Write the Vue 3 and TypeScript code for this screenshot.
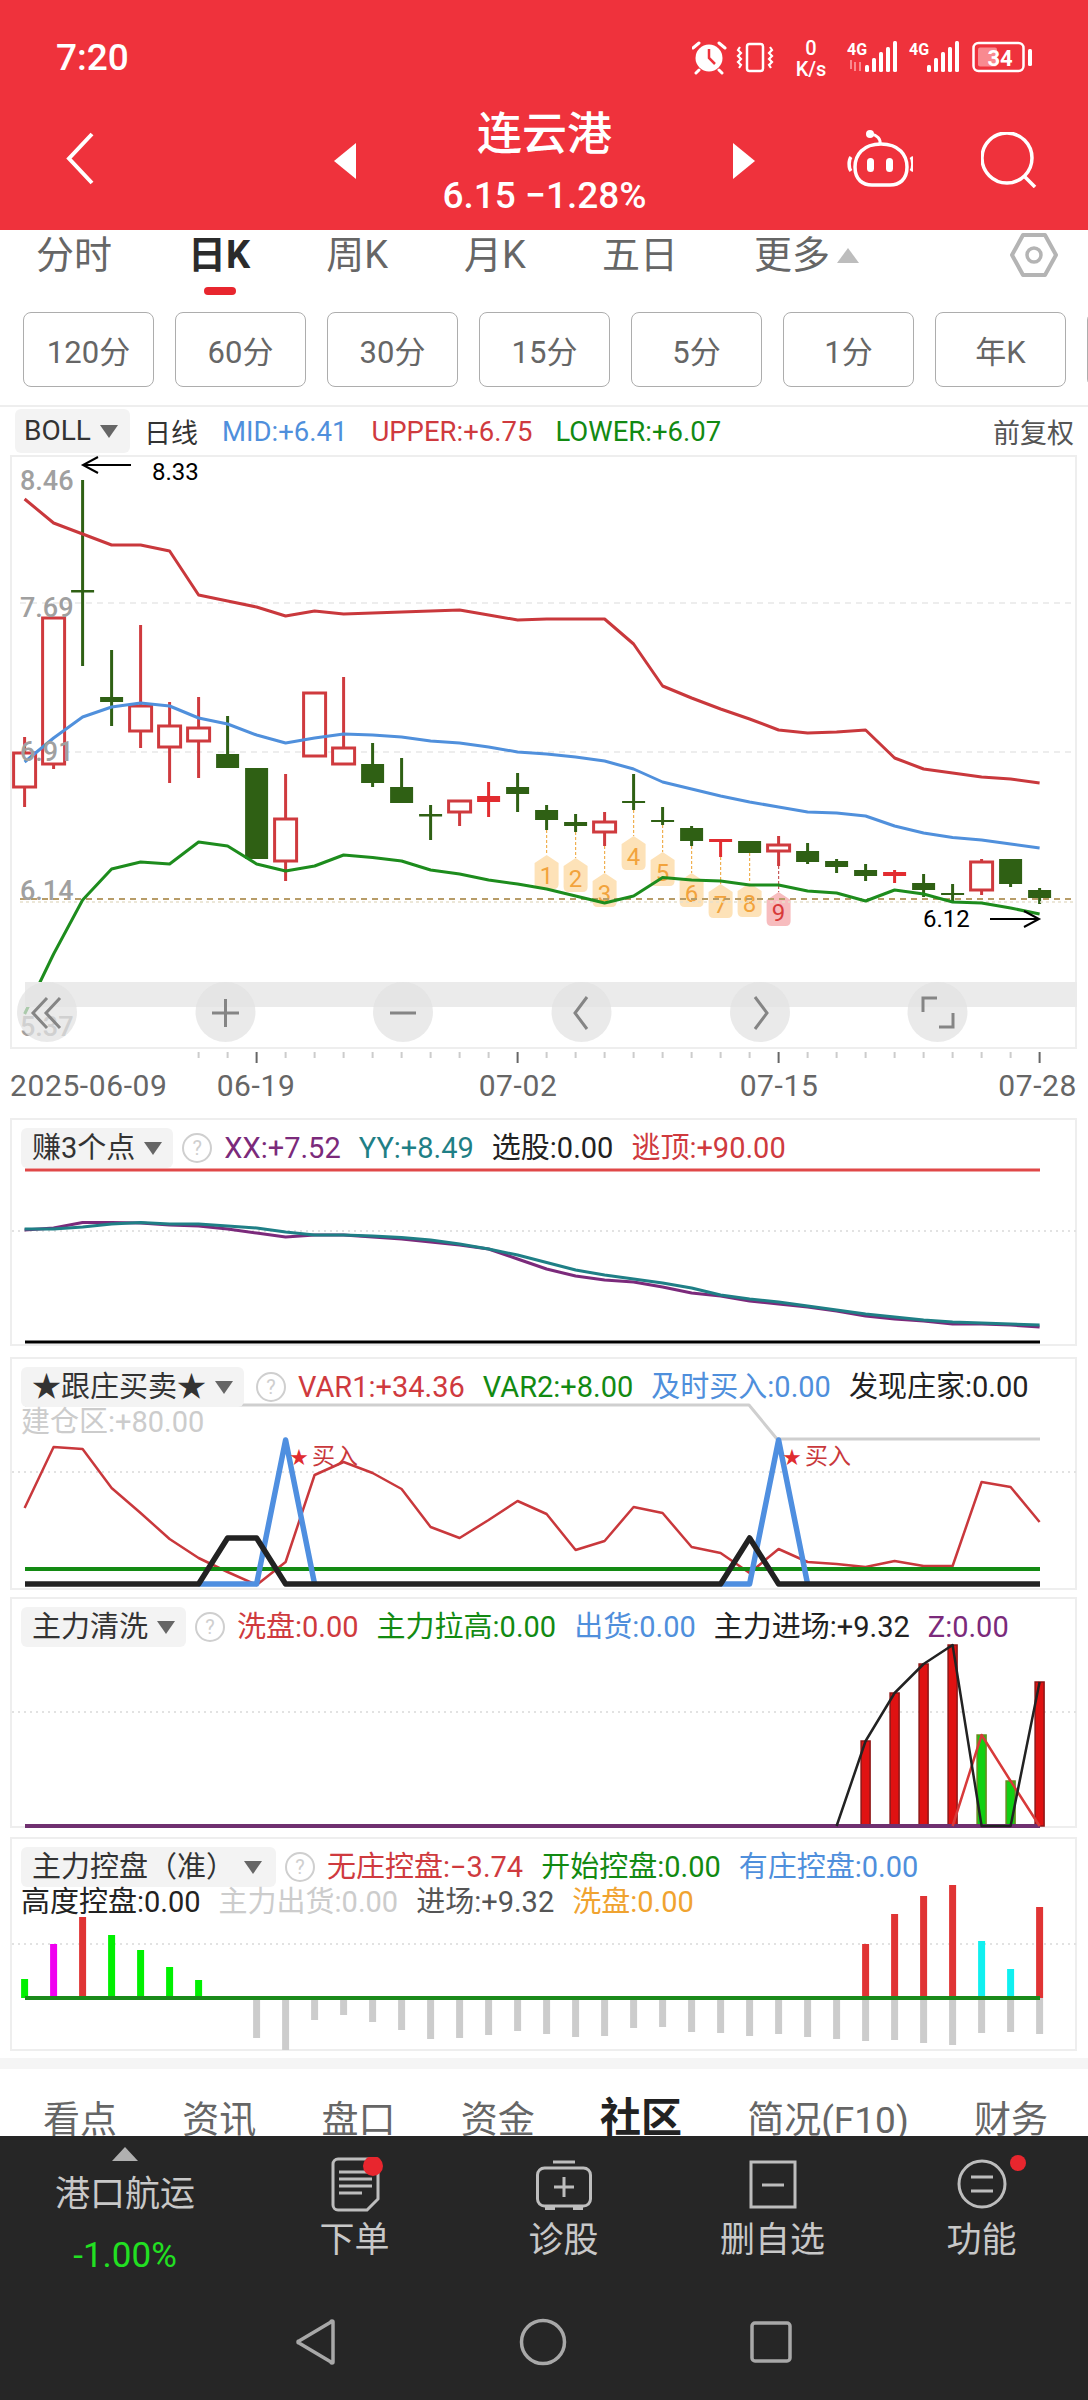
<template>
  <div class="screen">
    <header class="top">
      <div class="status">
        <span class="clock">7:20</span>
        <svg class="status-icons" width="340" height="44" viewBox="692 36 340 44">
          <!-- alarm -->
          <circle cx="709" cy="58" r="13.5" fill="#fff" />
          <path d="M709 49v9l6 6" fill="none" stroke="#ef323c" stroke-width="2.5" />
          <path d="M693 48l6-5M725 48l-6-5M699 70l-3 3M719 70l3 3" stroke="#fff" stroke-width="3" stroke-linecap="round" />
          <!-- vibrate -->
          <rect x="747" y="44" width="16" height="27" rx="2.5" fill="none" stroke="#fff" stroke-width="2.5" />
          <path d="M740 47l-2 3 3 3-3 3 3 3-3 3 3 3-2 3M770 47l2 3-3 3 3 3-3 3 3 3-3 3 2 3" fill="none" stroke="#fff" stroke-width="2.2" />
          <!-- net speed -->
          <text x="811" y="55" class="st-speed" text-anchor="middle">0</text>
          <text x="811" y="76" class="st-speed" text-anchor="middle">K/s</text>
          <!-- sim 1 -->
          <text x="847" y="55" class="st-net">4G</text>
          <path d="M851 60v9M855 71l0-9M860 71v-9" stroke="#fa8a90" stroke-width="2" />
          <rect v-for="b in signal" :key="'a' + b.x" :x="b.x + 865" :y="b.y" width="4" :height="72 - b.y" rx="1.5" fill="#fff" />
          <!-- sim 2 -->
          <text x="909" y="55" class="st-net">4G</text>
          <rect v-for="b in signal" :key="'b' + b.x" :x="b.x + 927" :y="b.y" width="4" :height="72 - b.y" rx="1.5" fill="#fff" />
          <!-- battery -->
          <rect x="973.5" y="43" width="50" height="28" rx="5" fill="none" stroke="#fff" stroke-width="2.5" />
          <rect x="978" y="47.5" width="19" height="19" rx="2" fill="#f98a90" />
          <rect x="1028" y="49" width="4" height="17" rx="1.5" fill="#fff" />
          <text x="1000" y="66" class="st-batt" text-anchor="middle">34</text>
        </svg>
      </div>
      <div class="nav">
        <svg class="back" width="28" height="53" viewBox="0 0 28 53">
          <path d="M26 2L3 26.5 26 51" fill="none" stroke="#fff" stroke-width="4" />
        </svg>
        <span class="tri tri-left"></span>
        <div class="title">
          <div class="name">连云港</div>
          <div class="price">6.15 −1.28%</div>
        </div>
        <span class="tri tri-right"></span>
        <svg class="robot" width="67" height="58" viewBox="0 0 67 58">
          <path d="M35 14C53 14 61 25 61 37C61 50 53 55 44 55H26C17 55 9 50 9 37C9 25 17 14 35 14z" fill="none" stroke="#fff" stroke-width="3.500" />
          <path d="M5 27c-2.500 3-2.500 11 0 14M65 27c2.500 3 2.500 11 0 14" fill="none" stroke="#fff" stroke-width="3.500" />
          <path d="M34 14c1-5-3-9-9-10" fill="none" stroke="#fff" stroke-width="3" />
          <circle cx="24" cy="4" r="4" fill="#fff" />
          <rect x="21" y="28" width="7" height="14" rx="3.500" fill="#fff" />
          <rect x="40" y="28" width="7" height="14" rx="3.500" fill="#fff" />
        </svg>
        <svg class="search" width="56" height="56" viewBox="0 0 56 56">
          <circle cx="26" cy="26" r="25" fill="none" stroke="#fff" stroke-width="3.500" />
          <path d="M44 45l10 10" stroke="#fff" stroke-width="3.500" />
        </svg>
      </div>
    </header>

    <nav class="periods">
      <span v-for="t in periods" :key="t" class="period" :class="{ on: t === '日K' }">{{ t }}</span>
      <span class="more-arrow"></span>
      <svg class="hex" width="48" height="46" viewBox="0 0 48 46">
        <path d="M13 3h22l11 20-11 20H13L2 23z" fill="none" stroke="#b4b4b4" stroke-width="4" stroke-linejoin="round" />
        <circle cx="24" cy="23" r="7" fill="none" stroke="#b4b4b4" stroke-width="3.5" />
      </svg>
    </nav>

    <div class="frames">
      <button v-for="f in frames" :key="f" class="frame">{{ f }}</button>
    </div>

    <div class="info">
      <span class="picker boll">BOLL<i class="caret"></i></span>
      <span class="info-item day">日线</span>
      <span class="info-item blue">MID:+6.41</span>
      <span class="info-item red">UPPER:+6.75</span>
      <span class="info-item green">LOWER:+6.07</span>
      <span class="info-item adj">前复权</span>
    </div>

    <!-- main K line chart, svg coordinates are page pixels -->
    <section class="box main-box">
      <svg class="plot" width="1067" height="594" viewBox="10 455 1067 594">
        <line x1="20" x2="1076" y1="603" y2="603" class="grid" />
        <line x1="20" x2="1076" y1="752" y2="752" class="grid" />
        <g v-for="(c, i) in candles" :key="i">
          <line :x1="X(i)" :x2="X(i)" :y1="c[1]" :y2="c[2]" :stroke="tone(c[0])" stroke-width="3" />
          <rect v-if="c[0] === 'r'" :x="X(i) - 11" :y="c[3]" width="22" :height="c[4] - c[3]" fill="#fff" :stroke="tone('r')" stroke-width="3" />
          <rect v-else :x="X(i) - 11.5" :y="c[3]" width="23" :height="c[4] - c[3]" :fill="tone(c[0])" />
        </g>
        <g v-for="t in tags" :key="t.n">
          <line :x1="X(t.i)" :x2="X(t.i)" :y1="candles[t.i][2]" :y2="t.top" :stroke="t.n === 9 ? '#c65a5a' : '#f0b050'" stroke-width="1.2" stroke-dasharray="3 2" />
          <path :d="tagShape(X(t.i), t.top, t.top + 34)" :fill="t.n === 9 ? '#f7bcbe' : '#fde2b8'" />
          <text :x="X(t.i)" :y="t.top + 29" class="tag" :fill="t.n === 9 ? '#d83a3a' : '#f2a33c'" text-anchor="middle">{{ t.n }}</text>
        </g>
        <line x1="20" x2="1076" y1="899" y2="899" stroke="#b79c68" stroke-width="2" stroke-dasharray="6 5" />
        <line x1="20" x2="1076" y1="902" y2="902" stroke="#e6e0cc" stroke-width="1.5" stroke-dasharray="3 3" />
        <polyline :points="line(upper)" class="ln" stroke="#c9383c" />
        <polyline :points="line(mid)" class="ln" stroke="#5090dc" />
        <polyline :points="line(lower)" class="ln" stroke="#1d8c1d" />
        <text x="20" y="490" class="axis">8.46</text>
        <text x="20" y="617" class="axis">7.69</text>
        <text x="20" y="761" class="axis">6.91</text>
        <text x="20" y="900" class="axis">6.14</text>
        <text x="20" y="1036" class="axis">5.37</text>
        <path d="M131 465H84M98 457l-15 8 15 8" fill="none" stroke="#000" stroke-width="2" />
        <text x="152" y="480" class="mark">8.33</text>
        <text x="923" y="927" class="mark">6.12</text>
        <path d="M990 919h48M1024 911l15 8-15 8" fill="none" stroke="#000" stroke-width="2" />
        <rect x="25" y="982" width="1052" height="25" fill="#ebebeb" />
        <circle v-for="cx in toolX" :key="cx" :cx="cx" cy="1012" r="30" fill="rgba(226,226,226,.72)" />
        <g fill="none" stroke="#858585" stroke-width="3">
          <path d="M47 998l-14 15 14 15M60 998l-14 15 14 15" />
          <path d="M212 1013h27M225.500 999v28" />
          <path d="M390 1013h26" />
          <path d="M587 997l-12 16 12 16" />
          <path d="M755 997l12 16-12 16" />
          <path d="M923 1012v-14h14M953 1013v14h-14" />
        </g>
      </svg>
    </section>

    <svg class="time-axis" width="1088" height="69" viewBox="0 1049 1088 69">
      <line v-for="i in tickIdx" :key="i" :x1="X(i)" :x2="X(i)" y1="1052" :y2="major.includes(i) ? 1063 : 1058" :stroke="major.includes(i) ? '#666' : '#ccc'" stroke-width="2" />
      <text x="10" y="1096" class="date">2025-06-09</text>
      <text x="256" y="1096" class="date" text-anchor="middle">06-19</text>
      <text x="518" y="1096" class="date" text-anchor="middle">07-02</text>
      <text x="779" y="1096" class="date" text-anchor="middle">07-15</text>
      <text x="1077" y="1096" class="date" text-anchor="end">07-28</text>
    </svg>

    <section class="box p-earn">
      <svg class="plot" width="1067" height="228" viewBox="10 1118 1067 228">
        <line x1="12" x2="1076" y1="1231" y2="1231" class="dots" />
        <line x1="25" x2="1040" y1="1170" y2="1170" stroke="#e04848" stroke-width="3" />
        <polyline :points="line(xx)" class="ln" stroke="#7b2a7b" />
        <polyline :points="line(yy)" class="ln" stroke="#1f7f86" />
        <line x1="25" x2="1040" y1="1342" y2="1342" stroke="#000" stroke-width="3" />
      </svg>
      <div class="legend">
        <span class="picker">赚3个点<i class="caret"></i></span>
        <span class="ask">?</span>
        <span class="purple">XX:+7.52</span>
        <span class="teal">YY:+8.49</span>
        <span class="black">选股:0.00</span>
        <span class="red">逃顶:+90.00</span>
      </div>
    </section>

    <section class="box p-follow">
      <svg class="plot" width="1067" height="233" viewBox="10 1357 1067 233">
        <line x1="12" x2="1076" y1="1472" y2="1472" class="dots" />
        <polyline points="25,1405 749,1405 777,1439 1040,1439" class="ln" stroke="#cfcfcf" />
        <polyline :points="line(var1)" class="ln thin" stroke="#c9383c" />
        <line x1="25" x2="1040" y1="1569" y2="1569" stroke="#138a13" stroke-width="4" />
        <polyline :points="`${X(6)},1584 ${X(8)},1584 ${X(9)},1440 ${X(10)},1584`" class="ln fat" stroke="#4f8fe0" />
        <polyline :points="`${X(24)},1584 ${X(25)},1584 ${X(26)},1440 ${X(27)},1584`" class="ln fat" stroke="#4f8fe0" />
        <polyline :points="`25,1584 ${X(6)},1584 ${X(7)},1538 ${X(8)},1538 ${X(9)},1584 ${X(24)},1584 ${X(25)},1538 ${X(26)},1584 1040,1584`" class="ln fat" stroke="#222" />
        <text x="290" y="1464" class="buy-star">★</text>
        <text x="312" y="1464" class="buy">买入</text>
        <text x="783" y="1464" class="buy-star">★</text>
        <text x="805" y="1464" class="buy">买入</text>
      </svg>
      <div class="legend">
        <span class="picker">★跟庄买卖★<i class="caret"></i></span>
        <span class="ask">?</span>
        <span class="red">VAR1:+34.36</span>
        <span class="green">VAR2:+8.00</span>
        <span class="blue">及时买入:0.00</span>
        <span class="black">发现庄家:0.00</span>
        <span class="pale">建仓区:+80.00</span>
      </div>
    </section>

    <section class="box p-wash">
      <svg class="plot" width="1067" height="231" viewBox="10 1597 1067 231">
        <line x1="12" x2="1076" y1="1712" y2="1712" class="dots" />
        <rect v-for="b in washBars" :key="b.i" :x="X(b.i) - 4.500" :y="b.top" width="9" :height="1826 - b.top" :fill="b.up ? '#e01212' : '#12d012'" :stroke="b.up ? '#8e1616' : '#6a8a20'" stroke-width="1.500" />
        <line x1="25" x2="1040" y1="1826" y2="1826" stroke="#6f3070" stroke-width="4" />
        <polyline :points="`${X(32)},1826 ${X(33)},1735 ${X(34)},1781 ${X(35)},1826`" class="ln thin" stroke="#d83a3a" />
        <polyline :points="`${X(28)},1826 ${X(29)},1741 ${X(30)},1693 ${X(31)},1664 ${X(32)},1645 ${X(33)},1826 ${X(34)},1826 ${X(35)},1682`" class="ln thin" stroke="#222" />
      </svg>
      <div class="legend">
        <span class="picker">主力清洗<i class="caret"></i></span>
        <span class="ask">?</span>
        <span class="red">洗盘:0.00</span>
        <span class="green">主力拉高:0.00</span>
        <span class="blue">出货:0.00</span>
        <span class="black">主力进场:+9.32</span>
        <span class="purple">Z:0.00</span>
      </div>
    </section>

    <section class="box p-ctrl">
      <svg class="plot" width="1067" height="214" viewBox="10 1837 1067 214">
        <line x1="12" x2="1076" y1="1944" y2="1944" class="dots" />
        <rect v-for="b in ctrlDown" :key="b.i" :x="X(b.i) - 3.500" y="1998" width="7" :height="b.end - 1998" fill="#cccccc" />
        <rect v-for="b in ctrlUp" :key="b.i" :x="X(b.i) - 3.500" :y="b.top" width="7" :height="1998 - b.top" :fill="b.fill" />
        <line x1="25" x2="1040" y1="1998" y2="1998" stroke="#1a8a1a" stroke-width="4" />
      </svg>
      <div class="legend">
        <span class="picker">主力控盘（准）<i class="caret"></i></span>
        <span class="ask">?</span>
        <span class="red">无庄控盘:−3.74</span>
        <span class="green">开始控盘:0.00</span>
        <span class="blue">有庄控盘:0.00</span>
        <span class="black">高度控盘:0.00</span>
        <span class="pale">主力出货:0.00</span>
        <span class="slate">进场:+9.32</span>
        <span class="orange">洗盘:0.00</span>
      </div>
    </section>

    <div class="strip"></div>

    <div class="tabs">
      <span v-for="t in tabs" :key="t" :class="{ on: t === '社区' }">{{ t }}</span>
    </div>

    <footer class="dock">
      <div class="actions">
        <div class="sector">
          <span class="sector-up"></span>
          <span class="sector-name">港口航运</span>
          <span class="sector-pct">-1.00%</span>
        </div>
        <div class="action">
          <svg width="64" height="56" viewBox="0 0 64 56">
            <path d="M15 2h35a5 5 0 0 1 5 5v35L44 53H15a5 5 0 0 1-5-5V7a5 5 0 0 1 5-5z" class="ic" />
            <path d="M16 15h32M16 22h33M16 29h33M16 36h23" class="ic" />
            <circle cx="50" cy="9" r="10" fill="#e8262e" />
          </svg>
          <span>下单</span>
        </div>
        <div class="action">
          <svg width="64" height="56" viewBox="0 0 64 56">
            <path d="M21 5h22" class="ic" />
            <rect x="5.500" y="11" width="53" height="38" rx="7" class="ic" />
            <path d="M13 50h10v3H13zM41 50h10v3H41z" fill="#bdbdbd" />
            <path d="M32 20v20M22 30h20" class="ic" />
          </svg>
          <span>诊股</span>
        </div>
        <div class="action">
          <svg width="64" height="56" viewBox="0 0 64 56">
            <rect x="10" y="5" width="44" height="45" class="ic" />
            <path d="M21 28h22" class="ic" />
          </svg>
          <span>删自选</span>
        </div>
        <div class="action">
          <svg class="spill" width="64" height="56" viewBox="0 0 64 56">
            <circle cx="32" cy="27" r="23" class="ic" />
            <path d="M21 20h22M21 34h22" class="ic" />
            <circle cx="68" cy="6" r="8" fill="#e8262e" />
          </svg>
          <span>功能</span>
        </div>
      </div>
      <div class="softkeys">
        <svg width="40" height="46" viewBox="0 0 40 46">
          <path d="M37 3v40a1 1 0 0 1-2 0L3 24a1 1 0 0 1 0-2L35 3a1 1 0 0 1 2 0z" class="key" />
        </svg>
        <svg width="48" height="48" viewBox="0 0 48 48">
          <circle cx="24" cy="24" r="21.500" class="key" />
        </svg>
        <svg width="42" height="42" viewBox="0 0 42 42">
          <rect x="2" y="2" width="38" height="38" rx="3" class="key" />
        </svg>
      </div>
    </footer>
  </div>
</template>

<script setup lang="ts">
type Candle = [string, number, number, number, number]

const periods = ['分时', '日K', '周K', '月K', '五日', '更多']
const frames = ['120分', '60分', '30分', '15分', '5分', '1分', '年K', '季K']
const tabs = ['看点', '资讯', '盘口', '资金', '社区', '简况(F10)', '财务']

// signal strength bars, x relative to the sim group
const signal = [
  { x: 0, y: 65 },
  { x: 7, y: 58 },
  { x: 14, y: 52 },
  { x: 21, y: 47 },
  { x: 28, y: 41 },
]

const X = (i: number) => 24.6 + 29 * i
const line = (ys: number[]) => ys.map((y, i) => `${X(i)},${y}`).join(' ')
const tone = (k: string) => (k === 'g' ? '#2f6014' : k === 'R' ? '#e22c30' : '#cf3a3e')

const tagShape = (x: number, t: number, b: number) =>
  `M${x} ${t}L${x + 12} ${t + 8}V${b - 5}Q${x + 12} ${b} ${x + 7} ${b}H${x - 7}Q${x - 12} ${b} ${x - 12} ${b - 5}V${t + 8}Z`

// kind, high, low, body top, body bottom (already in pixels)
const candles: Candle[] = [
  ['r', 737, 807, 753, 787], ['r', 618, 769, 618, 764], ['g', 480, 666, 590, 592.5], ['g', 650, 726, 697, 702],
  ['r', 625, 748, 706, 731], ['r', 702, 783, 726, 747], ['r', 697, 778, 728, 741], ['g', 716, 768, 754, 768],
  ['g', 768, 859, 768, 859], ['r', 774, 881, 819, 861], ['r', 693, 756, 693, 756], ['r', 677, 764, 748, 764],
  ['g', 743, 787, 764, 783], ['g', 758, 803, 787, 803], ['g', 805, 840, 814, 816.5], ['r', 801, 826, 801, 812],
  ['R', 782, 817, 796, 802], ['g', 773, 812, 787, 794], ['g', 805, 830, 810, 820], ['g', 814, 832, 822, 826],
  ['r', 812, 846, 822, 832], ['g', 774, 810, 801, 803], ['g', 807, 825, 820, 822], ['g', 826, 846, 828, 841],
  ['R', 839, 857, 839, 842], ['g', 841, 853, 841, 853], ['r', 836, 866, 845, 851], ['g', 843, 864, 851, 862],
  ['g', 859, 873, 861, 867], ['g', 864, 881, 870, 876], ['R', 870, 883, 872, 876], ['g', 874, 897, 883, 890],
  ['g', 884, 901, 893, 895], ['r', 859, 895, 862, 890], ['g', 859, 887, 859, 884], ['g', 888, 904, 890, 898],
]

const upper = [499, 523, 534, 545, 545, 551, 595, 601, 607, 616, 611, 614, 613, 612, 611, 610, 615, 620, 619, 619, 619, 644, 686, 698, 709, 719, 730, 733, 732, 730, 758, 769, 773, 777, 779, 783]
const mid = [762, 738, 717, 707, 703, 706, 718, 724, 735, 743, 738, 734, 735, 737, 741, 743, 747, 752, 754, 757, 761, 769, 782, 789, 796, 802, 807, 812, 813, 816, 826, 833, 837.5, 840, 844, 848]
const lower = [1014, 954, 900, 869, 862, 864, 842, 846, 864, 871, 866, 855, 857.5, 861, 870, 874, 880, 884, 889, 896, 903, 896, 877.5, 880, 881, 885, 885, 891, 893, 901, 890, 894, 902, 903, 908, 914]

// nine-count markers under the candles
const tags = [
  { i: 18, n: 1, top: 855 },
  { i: 19, n: 2, top: 858 },
  { i: 20, n: 3, top: 873 },
  { i: 21, n: 4, top: 836 },
  { i: 22, n: 5, top: 852 },
  { i: 23, n: 6, top: 873 },
  { i: 24, n: 7, top: 884 },
  { i: 25, n: 8, top: 883 },
  { i: 26, n: 9, top: 892 },
]

const toolX = [47, 225.5, 403, 581.5, 760, 937.5]
const tickIdx = Array.from({ length: 30 }, (_, i) => i + 6)
const major = [8, 17, 26, 35]

const xx = [1230, 1228, 1222.5, 1222.5, 1223, 1225, 1226, 1229, 1233, 1237, 1235, 1235, 1237, 1239, 1242, 1245, 1249, 1259, 1269, 1276, 1280, 1282, 1287, 1293, 1296, 1301, 1304, 1307, 1311, 1316, 1319, 1321, 1324, 1324, 1325, 1327]
const yy = [1229, 1229, 1227, 1224, 1222.5, 1224, 1224, 1226, 1228, 1232, 1235, 1235, 1236, 1237.5, 1240, 1244, 1249, 1255, 1262.5, 1270, 1275, 1279, 1283, 1288, 1295, 1299, 1302, 1306, 1310, 1314, 1317, 1320, 1322, 1323, 1324, 1325]
const var1 = [1508, 1447, 1449, 1488, 1513, 1539, 1558, 1572, 1585, 1562, 1475, 1462, 1473, 1489, 1527, 1538, 1520, 1501, 1514, 1550, 1541, 1507, 1513, 1547, 1553, 1573, 1549, 1562, 1564, 1567, 1561, 1566, 1566, 1482, 1487, 1522]

const washBars = [
  { i: 29, top: 1741, up: true },
  { i: 30, top: 1693, up: true },
  { i: 31, top: 1664, up: true },
  { i: 32, top: 1645, up: true },
  { i: 33, top: 1735, up: false },
  { i: 34, top: 1781, up: false },
  { i: 35, top: 1682, up: true },
]

const ctrlUp = [
  { i: 0, top: 1979, fill: '#00f000' },
  { i: 1, top: 1944, fill: '#f000f0' },
  { i: 2, top: 1917, fill: '#e03434' },
  { i: 3, top: 1935, fill: '#00f000' },
  { i: 4, top: 1950, fill: '#00f000' },
  { i: 5, top: 1967, fill: '#00f000' },
  { i: 6, top: 1980, fill: '#00f000' },
  { i: 29, top: 1944, fill: '#e03434' },
  { i: 30, top: 1914, fill: '#e03434' },
  { i: 31, top: 1896, fill: '#e03434' },
  { i: 32, top: 1885, fill: '#e03434' },
  { i: 33, top: 1941, fill: '#10f0f0' },
  { i: 34, top: 1969, fill: '#10f0f0' },
  { i: 35, top: 1907, fill: '#e03434' },
]
const ctrlDown = [2038, 2050, 2020, 2015, 2022, 2030, 2039, 2038, 2035, 2031, 2034, 2037, 2036, 2028, 2027, 2032, 2033, 2036, 2034, 2037, 2039, 2041, 2040, 2043, 2045, 2033, 2032, 2034].map((end, n) => ({ i: n + 8, end }))
</script>

<style>
body {
  margin: 0;
  background: #fff;
}
</style>

<style scoped>
.screen {
  width: 1088px;
  height: 2400px;
  overflow: hidden;
  background: #fff;
  font-family: Roboto, 'Noto Sans CJK SC', sans-serif;
  color: #333;
}
.top {
  height: 230px;
  background: #ef323c;
  color: #fff;
}
.status {
  height: 96px;
  display: flex;
  align-items: flex-start;
  justify-content: space-between;
  padding: 36px 56px 0;
  box-sizing: border-box;
}
.clock {
  font-size: 37px;
  line-height: 44px;
  font-weight: 500;
}
.st-speed {
  font-size: 20px;
  font-weight: 500;
  fill: #fff;
}
.st-net {
  font-size: 16px;
  font-weight: 700;
  fill: #fff;
}
.st-batt {
  font-size: 22px;
  font-weight: 700;
  fill: #fff;
}
.nav {
  display: flex;
  align-items: flex-start;
  padding-left: 66px;
}
.back {
  margin-top: 36px;
  flex: none;
}
.tri {
  width: 0;
  height: 0;
  margin-top: 47px;
  border-top: 18px solid transparent;
  border-bottom: 18px solid transparent;
  flex: none;
}
.tri-left {
  margin-left: 240px;
  border-right: 22px solid #fff;
}
.tri-right {
  border-left: 22px solid #fff;
}
.title {
  width: 377px;
  padding-top: 11px;
  text-align: center;
  flex: none;
}
.name {
  font-size: 45px;
  line-height: 56px;
  font-weight: 500;
}
.price {
  margin-top: 13px;
  font-size: 37px;
  line-height: 40px;
  font-weight: 500;
}
.robot {
  margin: 34px 0 0 91px;
  flex: none;
}
.search {
  margin: 36px 0 0 68px;
  flex: none;
}
.periods {
  position: relative;
  height: 70px;
  display: flex;
  align-items: flex-start;
  padding-left: 36px;
  gap: 76px;
}
.period {
  position: relative;
  font-size: 38px;
  line-height: 50px;
  color: #666;
}
.period.on {
  color: #2b2b2b;
  font-weight: 700;
}
.period.on::after {
  content: '';
  position: absolute;
  left: 16px;
  top: 57px;
  width: 32px;
  height: 8px;
  border-radius: 4px;
  background: #e8262e;
}
.more-arrow {
  width: 0;
  height: 0;
  margin: 18px 0 0 -69px;
  border-left: 11px solid transparent;
  border-right: 11px solid transparent;
  border-bottom: 15px solid #bdbdbd;
}
.hex {
  margin: 2px 30px 0 auto;
}
.frames {
  margin-top: 12px;
  padding-left: 23px;
  display: flex;
  gap: 21px;
  overflow: hidden;
}
.frame {
  width: 131px;
  height: 75px;
  flex: none;
  background: #fff;
  border: 1.5px solid #adadad;
  border-radius: 8px;
  padding: 0;
  font-family: inherit;
  font-size: 31px;
  color: #666;
}
.info {
  margin-top: 18px;
  height: 48px;
  border-top: 2px solid #eee;
  box-sizing: content-box;
  display: flex;
  align-items: center;
  padding-left: 15px;
  font-size: 27px;
}
.picker {
  display: inline-flex;
  align-items: center;
  height: 40px;
  padding: 0 11px;
  border-radius: 6px;
  background: #f3f3f3;
  font-size: 29px;
  line-height: 40px;
  color: #333;
  box-sizing: border-box;
}
.boll {
  height: 44px;
  width: 115px;
  padding: 0 9px;
  font-size: 28px;
}
.caret {
  width: 0;
  height: 0;
  margin-left: 9px;
  border-left: 9px solid transparent;
  border-right: 9px solid transparent;
  border-top: 13px solid #666;
}
.info-item {
  font-size: 27.5px;
}
.day {
  margin-left: 14px;
  font-size: 27px;
  color: #333;
}
.info .blue {
  margin-left: 24px;
}
.info .red {
  margin-left: 24px;
}
.info .green {
  margin-left: 23px;
}
.adj {
  margin-left: auto;
  margin-right: 14px;
  color: #555;
  font-size: 27px;
}
.red {
  color: #cf3a3e;
}
.green {
  color: #128a12;
}
.blue {
  color: #4f8fdc;
}
.black {
  color: #222;
}
.purple {
  color: #7b2a7b;
}
.teal {
  color: #1f7f86;
}
.pale {
  color: #cccccc;
}
.slate {
  color: #555;
}
.orange {
  color: #f0a330;
}
.box {
  position: relative;
  width: 1067px;
  margin-left: 10px;
  box-sizing: border-box;
  border: 2px solid #eeeeee;
}
.plot {
  position: absolute;
  left: -2px;
  top: -2px;
  overflow: visible;
}
.main-box {
  height: 594px;
}
.time-axis {
  display: block;
}
.p-earn {
  height: 228px;
}
.p-follow {
  height: 233px;
  margin-top: 11px;
}
.p-wash {
  height: 231px;
  margin-top: 7px;
}
.p-ctrl {
  height: 214px;
  margin-top: 9px;
}
.legend {
  position: relative;
  display: flex;
  flex-wrap: wrap;
  align-items: center;
  column-gap: 18px;
  padding: 8px 0 0 9px;
  font-size: 29px;
  line-height: 30px;
}
.legend .picker {
  margin-right: -9px;
}
.p-follow .picker {
  margin-right: -6px;
}
.p-ctrl .picker {
  padding-right: 14px;
}
.ask {
  width: 26px;
  height: 26px;
  border: 2px solid #cfcfcf;
  border-radius: 50%;
  color: #cfcfcf;
  font-size: 20px;
  line-height: 26px;
  text-align: center;
  margin-right: -6px;
}
.grid {
  stroke: #e8e8e8;
  stroke-width: 1.5;
  stroke-dasharray: 6 5;
}
.dots {
  stroke: #e2e2e2;
  stroke-width: 2;
  stroke-dasharray: 2 4;
}
.ln {
  fill: none;
  stroke-width: 3;
  stroke-linejoin: round;
}
.thin {
  stroke-width: 2.5;
}
.fat {
  stroke-width: 5.5;
}
.axis {
  font-size: 27px;
  font-weight: 500;
  fill: #a0a0a0;
}
.mark {
  font-size: 24px;
  fill: #000;
}
.tag {
  font-size: 24px;
}
.date {
  font-size: 30px;
  fill: #666;
  letter-spacing: 0.6px;
}
.buy {
  font-size: 23px;
  fill: #c9383c;
}
.buy-star {
  font-size: 18px;
  fill: #e02c30;
}
.strip {
  height: 11px;
  margin-top: 7px;
  background: #f5f5f5;
}
.tabs {
  height: 67px;
  overflow: hidden;
  display: flex;
  justify-content: space-between;
  align-items: flex-start;
  padding: 30px 40px 0 43px;
  box-sizing: border-box;
  font-size: 37px;
  line-height: 44px;
  color: #666;
}
.tabs .on {
  font-size: 41px;
  font-weight: 700;
  color: #222;
  margin-top: -3px;
}
.dock {
  height: 264px;
  background: #262626;
}
.actions {
  height: 164px;
  display: grid;
  grid-template-columns: 250px repeat(4, 209px);
}
.sector {
  display: flex;
  flex-direction: column;
  align-items: center;
  padding-top: 11px;
}
.sector-up {
  width: 0;
  height: 0;
  border-left: 13px solid transparent;
  border-right: 13px solid transparent;
  border-bottom: 14px solid #b0b0b0;
}
.sector-name {
  margin-top: 14px;
  font-size: 35px;
  line-height: 40px;
  color: #c8c8c8;
}
.sector-pct {
  margin-top: 21px;
  font-size: 35px;
  line-height: 40px;
  color: #22e022;
}
.action {
  display: flex;
  flex-direction: column;
  align-items: center;
  padding-top: 21px;
  color: #c8c8c8;
  font-size: 35px;
  line-height: 40px;
}
.action span {
  margin-top: 8px;
}
.spill {
  overflow: visible;
}
.ic {
  fill: none;
  stroke: #bdbdbd;
  stroke-width: 3;
}
.softkeys {
  display: flex;
  justify-content: center;
  align-items: center;
  gap: 183px;
  height: 84px;
  margin-top: 0;
}
.key {
  fill: none;
  stroke: #a8a8a8;
  stroke-width: 3.5;
  stroke-linejoin: round;
}
</style>
